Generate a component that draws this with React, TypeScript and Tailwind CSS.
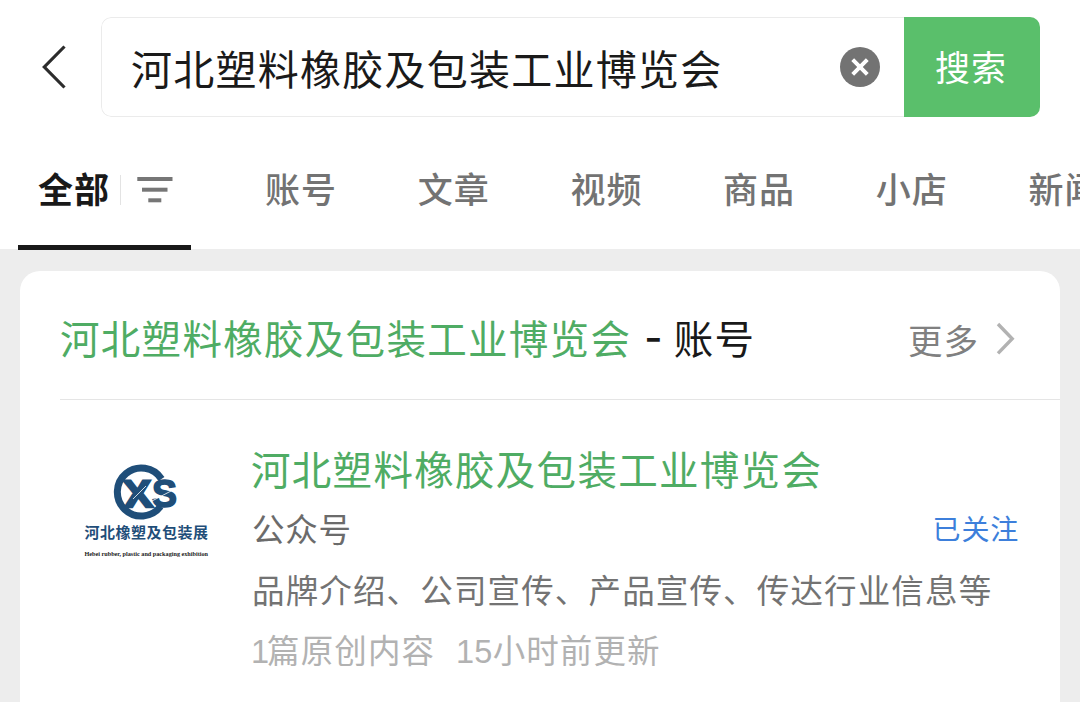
import { clsx } from 'clsx';

const QUERY = '河北塑料橡胶及包装工业博览会';
const TABS = ['账号', '文章', '视频', '商品', '小店', '新闻'];

function BackIcon() {
  return (
    <svg width="26" height="46" viewBox="0 0 26 46" fill="none" className="shrink-0">
      <path d="M24.5 2.5 L4.3 23 L24.5 43.5" stroke="#2c2c2c" strokeWidth="3.2" />
    </svg>
  );
}

function ClearIcon() {
  return (
    <svg width="40" height="40" viewBox="0 0 40 40" fill="none" className="shrink-0">
      <circle cx="20" cy="20" r="20" fill="#737373" />
      <path d="M12.7 12.7 L27.3 27.3 M27.3 12.7 L12.7 27.3" stroke="#fff" strokeWidth="4" />
    </svg>
  );
}

function FilterIcon() {
  return (
    <svg width="36" height="26" viewBox="0 0 36 26" fill="#767676" className="shrink-0">
      <rect x="0.3" y="0" width="35.2" height="4" />
      <rect x="5" y="10.7" width="25.5" height="4" />
      <rect x="11.3" y="21.3" width="13" height="4" />
    </svg>
  );
}

function ChevronIcon() {
  return (
    <svg width="20" height="34" viewBox="0 0 20 34" fill="none" className="shrink-0">
      <path d="M2 2 L16.2 16.7 L2 31.4" stroke="#b2b2b2" strokeWidth="3.4" />
    </svg>
  );
}

function ExpoLogo() {
  return (
    <svg width="132" height="104" viewBox="0 0 132 104" className="shrink-0">
      <path d="M81.5 19 A24 24 0 1 0 80.5 46.5" stroke="#1f4e79" strokeWidth="7" fill="none" />
      <text
        x="0"
        y="0"
        transform="translate(45 47.2) skewX(5)"
        textLength="28"
        lengthAdjust="spacingAndGlyphs"
        fill="#1f4e79"
        stroke="#1f4e79"
        strokeWidth="2.6"
        className="font-['Liberation_Sans'] text-[38px] font-bold"
      >
        X
      </text>
      <path d="M53 39 L66 26" stroke="#fff" strokeWidth="0.8" />
      <text
        x="72"
        y="46.8"
        textLength="25"
        lengthAdjust="spacingAndGlyphs"
        fill="#1f4e79"
        stroke="#1f4e79"
        strokeWidth="1.6"
        className="font-['Liberation_Sans'] text-[38px] font-bold"
      >
        S
      </text>
      <path d="M72 41 L91 31" stroke="#fff" strokeWidth="0.8" />
      <text
        x="4.5"
        y="78"
        textLength="123.5"
        fill="#1f4e79"
        className="font-['Noto_Sans_CJK_SC',sans-serif] text-[15px] font-bold"
      >
        河北橡塑及包装展
      </text>
      <text
        x="4.5"
        y="96"
        textLength="123.5"
        lengthAdjust="spacingAndGlyphs"
        fill="#222"
        className="font-['Liberation_Serif',serif] text-[6px] font-bold"
      >
        Hebei rubber, plastic and packaging exhibition
      </text>
    </svg>
  );
}

function SearchBar() {
  return (
    <div className="flex items-center pt-[17px] pl-[40px] pr-[40px]">
      <BackIcon />
      <div className="ml-[35px] flex h-[100px] flex-1 overflow-hidden rounded-[10px]">
        <div className="flex flex-1 items-center justify-between rounded-l-[10px] border border-r-0 border-[#ebebeb] pl-[29px] pr-[24px]">
          <span className="text-[41px] leading-[48px] tracking-[1.25px] text-[#1a1a1a]">{QUERY}</span>
          <ClearIcon />
        </div>
        <button className="w-[136px] bg-[#5abf6b] pr-[2px] pb-[2px] text-[35px] leading-[48px] tracking-[1px] text-white">
          搜索
        </button>
      </div>
    </div>
  );
}

function TabBar() {
  return (
    <div className="flex h-[133px] items-stretch overflow-hidden pl-[18px] text-[35px] leading-[40px] tracking-[1px]">
      <div className="flex w-[173px] shrink-0 items-start border-b-[5px] border-[#191919] pt-[51px] pl-5">
        <span className="font-bold text-[#191919]">全部</span>
        <span className="mt-[7px] ml-[10px] h-[30px] w-px bg-[#e3e3e3]" />
        <span className="mt-[9px] ml-[16px]">
          <FilterIcon />
        </span>
      </div>
      <div className="flex gap-[80.7px] pt-[51px] pl-[74px]">
        {TABS.map((tab) => (
          <span key={tab} className="shrink-0 font-medium whitespace-nowrap text-[#737373]">
            {tab}
          </span>
        ))}
      </div>
    </div>
  );
}

function SectionHeader() {
  return (
    <div className="ml-10 flex h-[129px] items-center justify-between border-b border-[#e5e5e5] pt-[4px] pr-[44px]">
      <h2 className="flex text-[39.5px] leading-[44px] font-normal tracking-[1.3px] text-[#191919]">
        <span className="text-[#4fac64]">{QUERY}</span>
        <span className="mr-[10px] ml-[13px] pt-px font-['Inter'] font-medium">-</span>
        <span>账号</span>
      </h2>
      <div className="flex items-center gap-[17px] pt-[3px] text-[#808080]">
        <span className="text-[34.5px] leading-[44px] tracking-[1px]">更多</span>
        <ChevronIcon />
      </div>
    </div>
  );
}

function Line({ className, children }: { className?: string; children: React.ReactNode }) {
  return <div className={clsx('flex items-center whitespace-nowrap', className)}>{children}</div>;
}

function AccountItem() {
  return (
    <div className="flex pl-[60px]">
      <div className="pt-[60px]">
        <ExpoLogo />
      </div>
      <div className="ml-[39px] flex-1 pt-[43px] pr-[41px]">
        <Line className="h-[50px] text-[39.5px] tracking-[1.3px] text-[#4fac64]">{QUERY}</Line>
        <Line className="h-[70px] justify-between">
          <span className="pl-px text-[32.5px] tracking-[0.8px] text-[#6b6b6b]">公众号</span>
          <span className="text-[28px] tracking-[0.8px] text-[#3d7fdb]">已关注</span>
        </Line>
        <Line className="h-[53px] pl-px text-[32.5px] tracking-[1.15px] text-[#737373]">
          品牌介绍、公司宣传、产品宣传、传达行业信息等
        </Line>
        <Line className="h-[72px] gap-[21px] font-['Liberation_Sans','Noto_Sans_CJK_SC',sans-serif] text-[32.5px] tracking-[1.1px] text-[#b2b2b2]">
          <span>
            <span className="tracking-[-2px]">1</span>篇原创内容
          </span>
          <span>
            <span className="tracking-[0.2px]">15</span>小时前更新
          </span>
        </Line>
      </div>
    </div>
  );
}

export default function App() {
  return (
    <div className="flex h-[702px] w-[1080px] flex-col overflow-hidden bg-[#ededed] font-['Noto_Sans_CJK_SC',sans-serif]">
      <header className="h-[249px] shrink-0 bg-white">
        <SearchBar />
        <TabBar />
      </header>
      <main className="mx-5 mt-[22px] flex-1 rounded-t-[20px] bg-white">
        <SectionHeader />
        <AccountItem />
      </main>
    </div>
  );
}
